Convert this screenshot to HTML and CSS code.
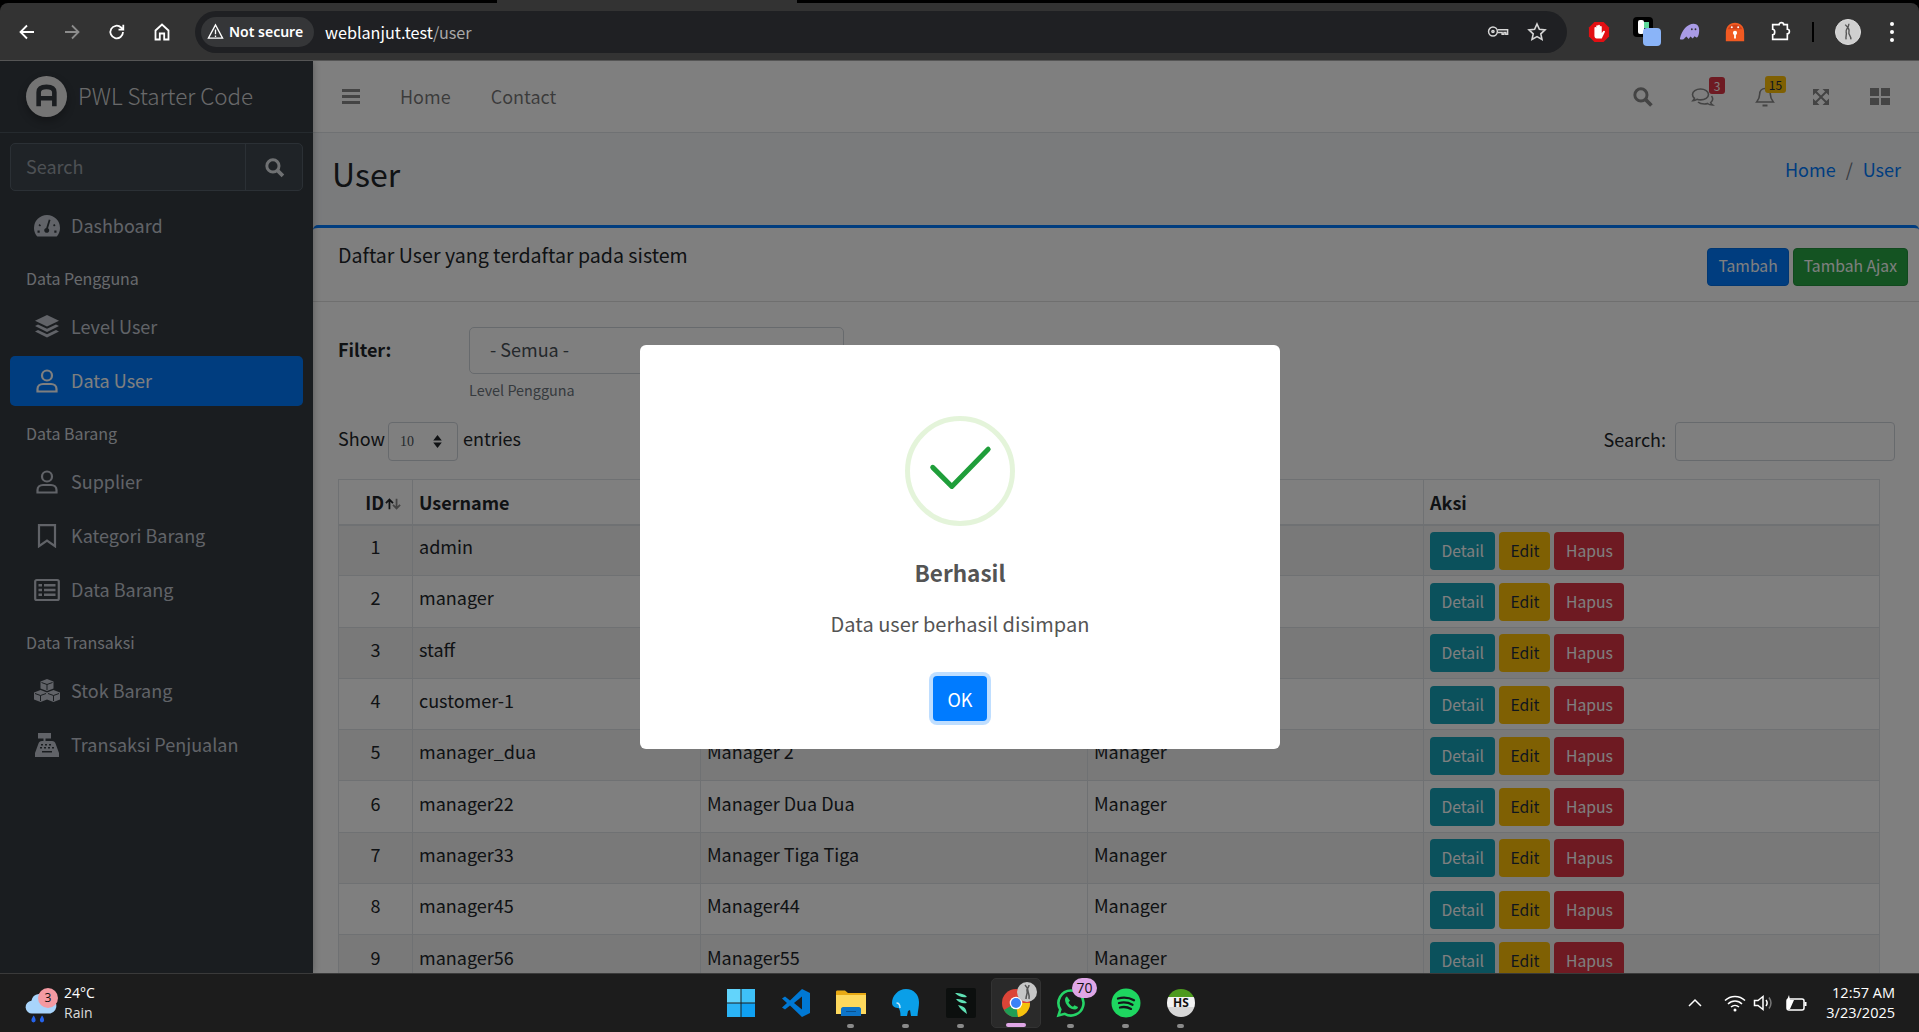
FILE: index.html
```html
<!DOCTYPE html>
<html lang="en">
<head>
<meta charset="utf-8">
<title>User</title>
<link rel="stylesheet" href="styles.css">
</head>
<body>
<div class="screen">
  <div class="topstrip"><span class="strip-b"></span><span class="strip-c"></span></div>
  <header class="chrome">
    <svg class="cicon" viewBox="0 0 20 20"><path d="M17 10H4M10 3.5 3.5 10l6.500 6.500" class="wl"/></svg>
    <svg class="cicon dim" viewBox="0 0 20 20"><path d="M3 10h13M10 3.500 16.500 10 10 16.500" class="gl"/></svg>
    <svg class="cicon" viewBox="0 0 20 20"><path d="M16 10a6.300 6.300 0 1 1-1.900-4.500L16 7.300M16.300 2.800v4.800h-4.800" class="wl"/></svg>
    <svg class="cicon" viewBox="0 0 20 20"><path d="M3.500 8.500 10 2.500l6.500 6v9h-4.300v-6H7.800v6H3.500z" class="wl"/></svg>
    <div class="omnibox">
      <div class="secure">
        <svg class="warn" viewBox="0 0 18 18"><path d="M9 2 1.500 16h15z" class="wl thin"/><path d="M9 7v5M9 13.200v1.500" class="wl thin"/></svg>
        <span>Not secure</span>
      </div>
      <div class="url">weblanjut.test<span class="path">/user</span></div>
      <svg class="omni-icon key" viewBox="0 0 24 14"><circle cx="6.500" cy="7" r="4.800" class="ll"/><circle cx="6.500" cy="7" r="1.200" class="ll"/><path d="M11.500 5h11v5h-2V8h-2v2h-2V8h-5" class="ll"/></svg>
      <svg class="omni-icon star" viewBox="0 0 20 20"><path d="m10 2 2.400 5.300 5.600.6-4.200 3.900 1.200 5.700L10 14.600l-5 2.900 1.200-5.700L2 7.900l5.600-.6z" class="ll"/></svg>
    </div>
    <div class="extensions">
      <svg class="ext" viewBox="0 0 24 24"><path d="M7 1h10l6 6v10l-6 6H7l-6-6V7z" fill="#e20f13"/><path d="M7 13V7.500a1 1 0 0 1 2 0V12V5.500a1 1 0 0 1 2 0V12V5a1 1 0 0 1 2 0v7V6.500a1 1 0 0 1 2 0V13l1.700-2a1 1 0 0 1 1.600 1.200L15 19H9.500C8 19 7 17.500 7 16z" fill="#fff"/></svg>
      <div class="ext-stack"><span class="ext-black"></span><span class="ext-bar"></span><span class="ext-green"></span><span class="ext-blue"></span></div>
      <svg class="ext" viewBox="0 0 24 24"><path d="M1 19C3 10 9 3 16 3c4 0 6 3 6 7 0 4-1 8-3 8l-2-1.500-2 2.500-2.500-2-2 2.500L8 17l-3 3c-2 .5-4 .5-4-1z" fill="#a99be6"/><circle cx="14" cy="9" r="1" fill="#333"/><circle cx="18" cy="9" r="1" fill="#333"/></svg>
      <svg class="ext" viewBox="0 0 24 24"><path d="M2 22v-9C2 6 6 2 12 2s10 4 10 11v9z" fill="#f15a22"/><path d="M4 9c1-3 4-5 8-5s7 2 8 5z" fill="#d2431a"/><circle cx="8.500" cy="6.800" r="1.100" fill="#fff"/><circle cx="15.500" cy="6.800" r="1.100" fill="#fff"/><circle cx="12" cy="13" r="2.300" fill="#fff"/><path d="M11 13h2v6h-2z" fill="#fff"/></svg>
      <svg class="ext" viewBox="0 0 24 24"><path d="M4 4h7c0-3 5-3 5 0h4v5c3 0 3 5 0 5v6H4v-5c3 0 3-6 0-6z" class="wl"/></svg>
      <span class="ext-sep"></span>
      <div class="avatar"><svg viewBox="0 0 26 26"><path d="M10 5c3 3 5 5 4 8s3 5 2 8M14 4c0 4-4 6-3 9s-1 5 0 8" class="al"/></svg></div>
      <div class="kebab"><i></i><i></i><i></i></div>
    </div>
  </header>

  <div class="page">
    <aside class="sidebar">
      <div class="brand">
        <div class="brand-logo"><svg viewBox="0 0 24 24"><path d="M5.500 20V8.500C5.500 5.500 8 4 12 4s6.500 1.500 6.500 4.500V20M5.500 13.500h13" class="brand-a"/></svg></div>
        <span class="brand-text">PWL Starter Code</span>
      </div>
      <div class="side-search"><span class="side-placeholder">Search</span><span class="side-btn"><svg viewBox="0 0 20 20"><circle cx="8.500" cy="8.500" r="5.800" class="side-s"/><path d="m13 13 5 5" class="side-s w3"/></svg></span></div>
      <nav class="side-nav">
        <a class="nav-link first"><svg class="nav-ic" viewBox="0 0 26 24"><path fill-rule="evenodd" d="M13 1a13 13 0 0 0-13 13c0 3 1 5.800 2.800 8 .3.400.8.500 1.300.500h17.800c.5 0 1-.1 1.300-.5C25 19.800 26 17 26 14A13 13 0 0 0 13 1zm1.800 4.500 1.700.5-2.500 8.200a2.500 2.500 0 1 1-1.800-.3zM5.500 10l1.500 1.200-1 1.300-1.500-1.200zM20.500 10l1 1.500-1.500 1-1-1.500zM3.500 16.500h2.200v2.200H3.500zM20.300 16.500h2.200v2.200h-2.200z"/></svg><span class="nav-label">Dashboard</span></a>
        <div class="nav-header">Data Pengguna</div>
        <a class="nav-link"><svg class="nav-ic" viewBox="0 0 26 24"><path d="M13 0 1 5.800 13 11.600l12-5.800z"/><path d="M4 9.500 1 11l12 6 12-6-3-1.500-9 4.300z"/><path d="M4 15 1 16.500l12 6 12-6-3-1.500-9 4.300z"/></svg><span class="nav-label">Level User</span></a>
        <a class="nav-link active"><svg class="nav-ic" viewBox="0 0 26 24"><circle cx="13" cy="6.500" r="5" class="nav-o"/><path d="M3.500 22.500v-2.500C3.500 17 6 15 9 15h8c3 0 5.500 2 5.500 5v2.500z" class="nav-o"/></svg><span class="nav-label">Data User</span></a>
        <div class="nav-header">Data Barang</div>
        <a class="nav-link"><svg class="nav-ic" viewBox="0 0 26 24"><circle cx="13" cy="6.500" r="5" class="nav-o"/><path d="M3.500 22.500v-2.500C3.500 17 6 15 9 15h8c3 0 5.500 2 5.500 5v2.500z" class="nav-o"/></svg><span class="nav-label">Supplier</span></a>
        <a class="nav-link"><svg class="nav-ic" viewBox="0 0 26 24"><path d="M5 1.200h16v21L13 16.500l-8 5.700z" class="nav-o"/></svg><span class="nav-label">Kategori Barang</span></a>
        <a class="nav-link"><svg class="nav-ic" viewBox="0 0 26 24"><rect x="1.200" y="2" width="23.600" height="20" rx="1.500" class="nav-o"/><path d="M4.500 6h3.500v2.500H4.500zM4.500 10.800h3.500v2.500H4.500zM4.500 15.500h3.500V18H4.500zM10 6h11.500v2.500H10zM10 10.800h11.500v2.500H10zM10 15.500h11.500V18H10z"/></svg><span class="nav-label">Data Barang</span></a>
        <div class="nav-header">Data Transaksi</div>
        <a class="nav-link"><svg class="nav-ic" viewBox="0 0 26 24"><path d="M13 0l6.500 2.500v7L13 12 6.500 9.500v-7z"/><path d="M6.500 11 13 13.500v7L6.500 23 0 20.500v-7zM19.500 11l6.500 2.500v7L19.500 23 13 20.500v-7z"/><path d="M7.500 3.500 13 5.500l5.500-2M13 5.500V11M1 14.500 6.500 16.500l5.500-2M14 14.500l5.500 2 5.500-2M6.500 16.500V22M19.500 16.500V22" class="cube-line"/></svg><span class="nav-label">Stok Barang</span></a>
        <a class="nav-link"><svg class="nav-ic" viewBox="0 0 26 24"><path d="M4 0h13v5.500h-5.500V8H18c2 0 3 1 3.500 2.500L25 20v4H1v-4l3.500-9.500C5 9 6 8 8 8h1.500V5.500H4z"/><path d="M7 11h2v1.500H7zM11 11h2v1.500h-2zM15 11h2v1.500h-2zM6 14h2v1.500H6zM10 14h2v1.500h-2zM14 14h2v1.500h-2zM18 14h2v1.500h-2zM8 18h10v1.500H8z" fill="#343a40"/></svg><span class="nav-label">Transaksi Penjualan</span></a>
      </nav>
    </aside>

    <main class="content">
      <div class="navbar">
        <div class="hamburger"><i></i><i></i><i></i></div>
        <a class="nav-item">Home</a>
        <a class="nav-item">Contact</a>
        <div class="nav-right">
          <svg class="nr nr-search" viewBox="0 0 20 20"><circle cx="8.500" cy="8.500" r="5.800" class="nr-s"/><path d="m13 13 5.500 5.500" class="nr-s w3"/></svg>
          <div class="nr-wrap wrap-msg">
            <svg class="nr nr-msg" viewBox="0 0 24 20"><path d="M9.500 2C5 2 1.500 4.500 1.500 7.500c0 1.500.8 2.800 2 3.800-.4 1-1 1.800-1.500 2.300 1.500 0 3-.6 4-1.300 1 .4 2.300.6 3.500.6 4.500 0 8-2.400 8-5.400S14 2 9.500 2z" class="nr-l"/><path d="M7 15c1.500 1.500 4 2 6.500 2 1 0 2-.1 3-.5 1 .8 3 1.500 5 1.500-.7-.5-1.500-1.500-1.800-2.500 1.200-1 2-2.300 2-3.600 0-1-.5-2-1.200-2.900" class="nr-l"/></svg>
            <span class="badge red">3</span>
          </div>
          <div class="nr-wrap wrap-bell">
            <svg class="nr nr-bell" viewBox="0 0 20 22"><path d="M10 2.500c-3 0-5.300 2.300-5.300 5.500 0 4-1 5.500-3 8h16.600c-2-2.500-3-4-3-8 0-3.200-2.300-5.500-5.300-5.500z" class="nr-l"/><path d="M7.500 18.500h5v2h-5z" class="nr-f"/></svg>
            <span class="badge yellow">15</span>
          </div>
          <svg class="nr nr-expand" viewBox="0 0 18 18"><path d="M1 1h6.500L4.950 3.550 9 7.600l4.050-4.050L10.500 1H17v6.500l-2.550-2.550L10.400 9l4.050 4.050L17 10.500V17h-6.500l2.550-2.550L9 10.400l-4.050 4.050L7.500 17H1v-6.500l2.550 2.550L7.600 9 3.550 4.950 1 7.500z" class="nr-f"/></svg>
          <div class="nr-grid"><i></i><i></i><i></i><i></i></div>
        </div>
      </div>

      <div class="content-header">
        <h1 class="title">User</h1>
        <div class="breadcrumb"><a>Home</a><span class="bc-sep">/</span><a>User</a></div>
      </div>

      <section class="card">
        <div class="card-header">
          <h3 class="card-title">Daftar User yang terdaftar pada sistem</h3>
          <div class="card-tools"><a class="btn btn-primary">Tambah</a><a class="btn btn-success">Tambah Ajax</a></div>
        </div>
        <div class="card-body">
          <div class="filter">
            <label class="filter-label">Filter:</label>
            <div class="filter-field">
              <div class="select-box">- Semua -</div>
              <small class="filter-help">Level Pengguna</small>
            </div>
          </div>
          <div class="dt-top">
            <div class="dt-length">Show <span class="len-select">10<svg class="updown" viewBox="0 0 10 14"><path d="M5 1 9 6H1zM5 13 1 8h8z" fill="#212529"/></svg></span> entries</div>
            <div class="dt-search">Search: <span class="search-box"></span></div>
          </div>
          <table class="table">
            <colgroup><col class="c1"><col class="c2"><col class="c3"><col class="c4"><col class="c5"></colgroup>
            <thead>
              <tr><th class="id-h">ID<svg class="sort" viewBox="0 0 18 14"><path d="M5 13V2M1 6l4-4 4 4" class="sort-up"/><path d="M13 1v11M9 8l4 4 4-4" class="sort-dn"/></svg></th><th>Username</th><th>Nama</th><th>Level Pengguna</th><th>Aksi</th></tr>
            </thead>
            <tbody>
              <tr><td class="num">1</td><td>admin</td><td>Administrator</td><td>Administrator</td><td class="aksi"><a class="btn-sm info">Detail</a><a class="btn-sm warning">Edit</a><a class="btn-sm danger">Hapus</a></td></tr>
              <tr><td class="num">2</td><td>manager</td><td>Manager</td><td>Manager</td><td class="aksi"><a class="btn-sm info">Detail</a><a class="btn-sm warning">Edit</a><a class="btn-sm danger">Hapus</a></td></tr>
              <tr><td class="num">3</td><td>staff</td><td>Staff/Kasir</td><td>Staff/Kasir</td><td class="aksi"><a class="btn-sm info">Detail</a><a class="btn-sm warning">Edit</a><a class="btn-sm danger">Hapus</a></td></tr>
              <tr><td class="num">4</td><td>customer-1</td><td>Customer Pertama</td><td>Customer</td><td class="aksi"><a class="btn-sm info">Detail</a><a class="btn-sm warning">Edit</a><a class="btn-sm danger">Hapus</a></td></tr>
              <tr><td class="num">5</td><td>manager_dua</td><td>Manager 2</td><td>Manager</td><td class="aksi"><a class="btn-sm info">Detail</a><a class="btn-sm warning">Edit</a><a class="btn-sm danger">Hapus</a></td></tr>
              <tr><td class="num">6</td><td>manager22</td><td>Manager Dua Dua</td><td>Manager</td><td class="aksi"><a class="btn-sm info">Detail</a><a class="btn-sm warning">Edit</a><a class="btn-sm danger">Hapus</a></td></tr>
              <tr><td class="num">7</td><td>manager33</td><td>Manager Tiga Tiga</td><td>Manager</td><td class="aksi"><a class="btn-sm info">Detail</a><a class="btn-sm warning">Edit</a><a class="btn-sm danger">Hapus</a></td></tr>
              <tr><td class="num">8</td><td>manager45</td><td>Manager44</td><td>Manager</td><td class="aksi"><a class="btn-sm info">Detail</a><a class="btn-sm warning">Edit</a><a class="btn-sm danger">Hapus</a></td></tr>
              <tr><td class="num">9</td><td>manager56</td><td>Manager55</td><td>Manager</td><td class="aksi"><a class="btn-sm info">Detail</a><a class="btn-sm warning">Edit</a><a class="btn-sm danger">Hapus</a></td></tr>
            </tbody>
          </table>
        </div>
      </section>
    </main>

    <div class="backdrop">
      <div class="modal">
        <div class="success-icon"><svg viewBox="0 0 110 110"><path d="M25 51 46 72 86 31" class="check"/></svg></div>
        <h2 class="modal-title">Berhasil</h2>
        <p class="modal-text">Data user berhasil disimpan</p>
        <button class="modal-ok">OK</button>
      </div>
    </div>
  </div>

  <footer class="taskbar">
    <div class="weather">
      <svg class="weather-ic" viewBox="0 0 34 34"><path d="M8 24a6 6 0 0 1-1-12 8 8 0 0 1 15-2 6.500 6.500 0 0 1 3 14z" fill="#a8d4fb"/><path d="M9 26c-1 2-2 3-2 4.500a2 2 0 0 0 4 0C11 29 10 27 9 26zM17 26c-1 2-2 3-2 4.500a2 2 0 0 0 4 0c0-1.500-1-3.500-2-4.500z" fill="#2563eb"/></svg>
      <span class="weather-badge">3</span>
      <div class="weather-text"><span class="temp">24°C</span><span class="cond">Rain</span></div>
    </div>
    <div class="apps">
      <div class="app"><svg viewBox="0 0 30 30"><rect x="1" y="1" width="13.500" height="13.500" fill="#62d4fb"/><rect x="15.500" y="1" width="13.500" height="13.500" fill="#3fc1f7"/><rect x="1" y="15.500" width="13.500" height="13.500" fill="#2bb4f6"/><rect x="15.500" y="15.500" width="13.500" height="13.500" fill="#0fa0f2"/></svg></div>
      <div class="app"><svg viewBox="0 0 30 30"><path d="M21 1 29 5v20l-8 4-12-11.500-5 4L1 19.500 6 15 1 10.500 4 8.500l5 4z" fill="#0078d4"/><path d="M21 8.500 13 15l8 6.500z" fill="#1c1c1c"/></svg></div>
      <div class="app on"><svg viewBox="0 0 30 30"><path d="M0 4c0-1 .5-1.500 1.500-1.500H9L12 5h18v21H0z" fill="#e8a913"/><path d="M0 7h30v19H0z" fill="#fdd85d"/><path d="M5 21c0-1 1-2 2-2h16c1 0 2 1 2 2v7H5z" fill="#0d74c8"/><path d="M10 23h10v1H10z" fill="#094f8c"/></svg></div>
      <div class="app on"><svg viewBox="0 0 30 30"><path d="M15 1c8 0 13 6 13 13 0 5-1 8-1.500 14H20l-1-6-2 1-1 5H9.500c0-4-.5-6-2-8C5 20 1 19 1 15 1 8 7 1 15 1z" fill="#0a9fe8"/><path d="M5.500 15c2 0 3.500 2 3.500 5" fill="none" stroke="#bfe7fb" stroke-width="1.500"/></svg></div>
      <div class="app on"><svg viewBox="0 0 30 30"><rect width="30" height="30" rx="2" fill="#0c0f0e"/><path d="M9 5c5 0 10 1 12 4-4 1-8 0-12-4zM10 11c4 0 9 1 11 4-4 1-8 0-11-4zM12 17c4 1 7 2 8 5l1 4c-3-2-7-5-9-9z" fill="#5fe0b4"/></svg></div>
      <div class="app active-app">
        <svg viewBox="0 0 30 30"><circle cx="15" cy="15" r="14" fill="#db4437"/><path d="M15 15 2.900 22A14 14 0 0 0 17 28.900z" fill="#1f9d55"/><path d="M15 15h14a14 14 0 0 1-12 13.900z" fill="#f4c20d"/><circle cx="15" cy="15" r="6.300" fill="#fff"/><circle cx="15" cy="15" r="5" fill="#3b82f6"/></svg>
        <span class="app-avatar"><svg viewBox="0 0 20 20"><path d="M8 3c2 2 3 4 3 6s2 4 1 8M12 3c0 3-3 4-2 6s-1 4-1 8" class="al"/></svg></span>
      </div>
      <div class="app on"><svg viewBox="0 0 30 30"><path d="M15 2.500A12.500 12.500 0 0 0 4.300 21.500L2.500 27.500l6.200-1.700A12.500 12.500 0 1 0 15 2.500z" fill="none" stroke="#25d366" stroke-width="2.600"/><path d="M11 8.500c-1 0-2 1.500-2 3 0 5 5 10 10 10 1.500 0 3-1 3-2.500l-3.500-1.800-1.500 1.500c-2-.8-4-2.800-4.500-4.500l1.500-1.500z" fill="#25d366"/></svg><span class="wa-badge">70</span></div>
      <div class="app on"><svg viewBox="0 0 30 30"><circle cx="15" cy="15" r="14.500" fill="#1ed760"/><path d="M7 10.500c6-1.500 11-1 16 1.800M8 15c5-1.200 9-.8 13.500 1.700M9 19.500c4-1 7.500-.6 11 1.400" fill="none" stroke="#14171a" stroke-width="2.300" stroke-linecap="round"/></svg></div>
      <div class="app on"><div class="hs"><span>HS</span></div></div>
    </div>
    <div class="tray">
      <svg class="tr tr-caret" viewBox="0 0 14 10"><path d="M1 8 7 2l6 6" class="tw"/></svg>
      <svg class="tr tr-wifi" viewBox="0 0 22 18"><path d="M1 6.500C6.500 1 15.500 1 21 6.500M4 10c4-4 10-4 14 0M7 13c2.300-2 5.700-2 8 0" class="tw"/><circle cx="11" cy="16" r="1.500" fill="#fff"/></svg>
      <svg class="tr tr-vol" viewBox="0 0 22 18"><path d="M1.500 6.500h3.500L10 2.500v13L5 11.500H1.500z" class="tw"/><path d="M13 6c1.500 2 1.500 4 0 6" class="tw"/><path d="M16 3.500c2.500 3.500 2.500 7.500 0 11" class="tg"/></svg>
      <svg class="tr tr-batt" viewBox="0 0 24 18"><rect x="3" y="5" width="17" height="11" rx="2" class="tw"/><path d="M20.500 8h2v4h-2zM3 15V6l2-5 1 5 4 0-4 9z" fill="#fff"/></svg>
      <div class="clock"><span>12:57 AM</span><span>3/23/2025</span></div>
    </div>
  </footer>
</div>
</body>
</html>
```
FILE: styles.css
```css
* { box-sizing: border-box; }
html, body { margin: 0; height: 100%; overflow: hidden; }
body { font-family: "Noto Sans CJK SC", "Source Sans Pro", "Open Sans", sans-serif; font-size: 18px; line-height: 30px; color: #212529; background: #000; }
a { color: inherit; text-decoration: none; }
.screen { width: 1919px; height: 1032px; display: flex; flex-direction: column; overflow: hidden; }

/* window top */
.topstrip { height: 3px; display: flex; flex: none; background: #000; }
.strip-b { margin-left: 497px; width: 300px; background: #333; }
.strip-c { flex: 1; }
.chrome { height: 58px; flex: none; background: #333; border-bottom: 1px solid #555; border-radius: 8px 8px 0 0; display: flex; align-items: center; padding: 0 0 0 17px; gap: 25px; font-family: "Open Sans", sans-serif; position: relative; }
.cicon { width: 20px; height: 20px; flex: none; }
.wl { fill: none; stroke: #fff; stroke-width: 1.800; }
.gl { fill: none; stroke: #8c8c8c; stroke-width: 1.800; }
.wl.thin { stroke-width: 1.400; }
.ll { fill: none; stroke: #d6d6d6; stroke-width: 1.600; }
.al { fill: none; stroke: #555; stroke-width: 1.500; }
.omnibox { width: 1372px; margin-left: -2px; height: 42px; background: #1f2023; border-radius: 21px; display: flex; align-items: center; padding: 0 0 0 6px; }
.secure { width: 113px; height: 30px; background: #353638; border-radius: 15px; display: flex; align-items: center; gap: 5px; padding-left: 6px; color: #fff; font-size: 14px; font-weight: 600; white-space: nowrap; font-family: "Noto Sans", sans-serif; line-height: 30px; }
.warn { width: 17px; height: 17px; flex: none; }
.url { margin-left: 11px; color: #fff; font-size: 16.200px; line-height: 30px; font-family: "Noto Sans CJK SC", sans-serif; }
.path { color: #a8a8a8; }
.omni-icon { flex: none; }
.key { width: 22px; height: 13px; margin-left: auto; }
.star { width: 20px; height: 20px; margin: 0 20px 0 18px; }
.extensions { display: flex; align-items: center; gap: 23px; margin-left: -4px; height: 40px; position: relative; flex: 1; }
.ext { width: 22px; height: 22px; flex: none; }
.ext-stack { width: 28px; height: 30px; position: relative; flex: none; margin-right: -5px; }
.ext-black { display: block; width: 20px; height: 20px; background: #000; border-radius: 4px; }
.ext-bar { display: block; position: absolute; left: 5px; top: 3px; width: 6px; height: 14px; background: #fff; border-radius: 2px; }
.ext-green { display: block; position: absolute; left: 11px; top: 5px; width: 5px; height: 6px; background: #5fd99a; }
.ext-blue { display: block; position: absolute; left: 10px; top: 11px; width: 18px; height: 18px; background: #8ab4f8; border-radius: 4px; }
.ext-sep { width: 2px; height: 20px; background: #000; flex: none; margin: 0 -2px 0 -2px; }
.avatar { width: 26px; height: 26px; border-radius: 50%; background: #cfcfcf; flex: none; border: 1px solid #ddd; }
.avatar svg { display: block; width: 100%; height: 100%; }
.kebab { display: flex; flex-direction: column; gap: 4px; flex: none; margin-left: 6px; }
.kebab i { display: block; width: 4px; height: 4px; background: #fff; border-radius: 50%; }

/* page */
.page { flex: 1; min-height: 0; display: flex; position: relative; overflow: hidden; }
.sidebar { width: 313px; flex: none; background: #343a40; color: #c2c7d0; box-shadow: 0 0 8px rgba(0,0,0,.3); z-index: 1; }
.brand { height: 72px; display: flex; align-items: center; padding-left: 26px; gap: 11px; border-bottom: 1px solid #4b545c; }
.brand-logo { width: 41px; height: 41px; border-radius: 50%; background: #e9e9e9; box-shadow: 0 4px 8px rgba(0,0,0,.3); flex: none; }
.brand-logo svg { display: block; width: 41px; height: 41px; padding: 6px; }
.brand-a { fill: none; stroke: #343a40; stroke-width: 3.800; }
.brand-text { font-size: 22.400px; line-height: 30px; font-weight: 300; color: rgba(255,255,255,.8); margin-top: -3px; }
.side-search { margin: 10px 10px 0; width: 293px; height: 48px; border: 1px solid #56606a; border-radius: 5px; background: #3f474e; display: flex; justify-content: space-between; }
.side-placeholder { padding-left: 15px; color: #9aa1a8; line-height: 45px; }
.side-btn { width: 57px; border-left: 1px solid #56606a; display: flex; align-items: center; justify-content: center; }
.side-btn svg { width: 21px; height: 21px; }
.side-s { fill: none; stroke: #dfe3e7; stroke-width: 2.800; }
.side-s.w3, .nr-s.w3 { stroke-width: 3.500; }
.side-nav { padding: 0 10px; display: flex; flex-direction: column; }
.nav-link { height: 50px; margin-bottom: 4px; display: flex; align-items: center; padding-left: 24px; border-radius: 5px; gap: 11px; color: #c2c7d0; }
.nav-label { margin-top: -2px; }
.nav-link.first { margin-top: 10px; }
.nav-link.active { background: #007bff; color: #fff; }
.nav-ic { width: 26px; height: 24px; flex: none; fill: #c2c7d0; }
.active .nav-ic { fill: #fff; }
.nav-o { fill: none; stroke: #c2c7d0; stroke-width: 2.200; }
.active .nav-o { stroke: #fff; }
.cube-line { fill: none; stroke: #343a40; stroke-width: 1; }
.nav-header { font-size: 16px; line-height: 26px; padding: 10px 0 10px 16px; height: 47px; color: #d0d4db; }

.content { flex: 1; min-width: 0; background: #f4f6f9; }
.navbar { height: 72px; background: #fff; border-bottom: 1px solid #dee2e6; display: flex; align-items: center; padding-left: 29px; color: rgba(0,0,0,.55); }
.hamburger { width: 18px; display: flex; flex-direction: column; gap: 3px; margin-right: 40px; }
.hamburger i { display: block; height: 3px; background: #888; }
.nav-item { margin-right: 40px; margin-top: -2px; }
.nav-right { margin-left: auto; display: flex; align-items: center; padding-right: 29px; }
.nr { display: block; }
.nr-search { width: 21px; height: 21px; }
.nr-s { fill: none; stroke: #888; stroke-width: 2.800; }
.nr-l { fill: none; stroke: #888; stroke-width: 1.600; }
.nr-f { fill: #888; }
.nr-wrap { position: relative; }
.wrap-msg { margin-left: 38px; }
.wrap-bell { margin-left: 40px; }
.nr-msg { width: 24px; height: 20px; }
.nr-bell { width: 20px; height: 22px; }
.badge { position: absolute; top: -10px; height: 17px; font-size: 12px; line-height: 17px; text-align: center; border-radius: 3px; font-weight: 400; }
.badge.red { left: 18px; width: 16px; background: #dc3545; color: #fff; }
.badge.yellow { left: 10px; width: 21px; background: #ffc107; color: #1f2d3d; }
.nr-expand { width: 18px; height: 18px; margin-left: 37px; }
.nr-grid { width: 20px; height: 17px; margin-left: 40px; display: grid; grid-template-columns: 1fr 1fr; gap: 2px; }
.nr-grid i { background: #888; }

.content-header { height: 92px; display: flex; justify-content: space-between; padding: 18px 18px 0 19px; align-items: flex-start; }
.title { margin: 0; font-size: 32px; line-height: 44px; font-weight: 400; color: #212529; }
.breadcrumb { display: flex; color: #007bff; padding-top: 3px; }
.bc-sep { color: #6c757d; padding: 0 10px; }

.card { background: #fff; border-top: 3px solid #007bff; border-radius: 5px 5px 0 0; }
.card-header { height: 74px; border-bottom: 1px solid rgba(0,0,0,.125); display: flex; justify-content: space-between; padding: 12px 11px 0 25px; }
.card-title { margin: 0; font-size: 19.600px; line-height: 30px; font-weight: 400; }
.card-tools { display: flex; gap: 4px; padding-top: 8px; }
.btn { height: 38px; padding: 0 10px; font-size: 15.700px; line-height: 34px; border-radius: 4px; color: #fff; border: 1px solid transparent; }
.btn-primary { background: #007bff; border-color: #006fe6; }
.btn-success { background: #28a745; border-color: #23923d; }
.card-body { padding: 25px 25px 0; }
.filter { display: flex; }
.filter-label { width: 131px; font-weight: 700; line-height: 45px; flex: none; }
.select-box { width: 375px; height: 47px; border: 1px solid #ced4da; border-radius: 5px; padding-left: 20px; line-height: 42px; color: #495057; }
.filter-help { display: block; font-size: 14.400px; line-height: 24px; margin-top: 4px; color: #6c757d; }
.dt-top { display: flex; justify-content: space-between; margin-top: 20px; }
.dt-length, .dt-search { display: flex; align-items: flex-start; height: 39px; }
.dt-length { gap: 5px; line-height: 32px; }
.dt-search { gap: 9px; margin-right: -1px; line-height: 35px; }
.len-select { width: 70px; height: 39px; margin-left: -2px; border: 1px solid #ced4da; border-radius: 4px; font-size: 14px; padding-left: 11px; line-height: 38px; display: flex; align-items: center; gap: 18px; font-family: "Liberation Serif", serif; color: #495057; }
.updown { width: 11px; height: 15px; }
.search-box { width: 220px; height: 39px; border: 1px solid #ced4da; border-radius: 4px; }
.table { width: 1541px; margin-top: 18px; border-collapse: collapse; table-layout: fixed; }
.c1 { width: 74px; } .c2 { width: 288px; } .c3 { width: 387px; } .c4 { width: 336px; } .c5 { width: 456px; }
.table th, .table td { border: 1px solid #dee2e6; padding: 0 6px; text-align: left; height: 51.300px; vertical-align: middle; }
.table th { height: 45px; font-weight: 700; border-bottom-width: 2px; line-height: 28px; }
.table td { padding-bottom: 8px; }
.table td.aksi { padding: 1px 5px 0 6px; }
.table tbody tr:nth-child(odd) { background: rgba(0,0,0,.05); }
.id-h { text-align: right !important; padding-right: 11px !important; white-space: nowrap; }
.sort { display: inline-block; width: 16px; height: 14px; margin-left: 1px; vertical-align: -1px; }
.sort-up { fill: none; stroke: #212529; stroke-width: 2; }
.sort-dn { fill: none; stroke: #888; stroke-width: 2; }
.num { text-align: center !important; }
.btn-sm { display: inline-block; height: 38px; line-height: 35px; font-size: 15.700px; padding: 0 10.500px; margin-right: 4px; border-radius: 4px; border: 1px solid transparent; vertical-align: middle; }
.info { background: #17a2b8; color: #fff; }
.warning { background: #ffc107; color: #1f2d3d; padding: 0 10px; }
.danger { background: #dc3545; color: #fff; }

.backdrop { position: absolute; inset: 0; z-index: 2; background: rgba(0,0,0,.5); display: flex; justify-content: center; align-items: flex-start; padding: 284px 0 0 1px; }
.modal { width: 640px; height: 404px; background: #fff; border-radius: 6px; display: flex; flex-direction: column; align-items: center; padding-top: 71px; }
.success-icon { width: 110px; height: 110px; border-radius: 50%; border: 5px solid rgba(165,220,134,.3); flex: none; }
.success-icon svg { display: block; width: 100px; height: 100px; }
.check { fill: none; stroke: #1f9e3a; stroke-width: 5.500; stroke-linecap: round; stroke-linejoin: round; }
.modal-title { margin: 28px 0 0; font-size: 22.500px; line-height: 36px; font-weight: 700; color: #545454; }
.modal-text { margin: 18px 0 0; font-size: 20px; line-height: 32px; color: #545454; font-weight: 400; }
.modal-ok { margin-top: 36px; width: 54px; height: 45px; border: 0; padding: 0; border-radius: 4px; background: #007bff; color: #fff; font-size: 18px; font-family: inherit; box-shadow: 0 0 0 4px rgba(0,123,255,.25); }

/* taskbar */
.taskbar { height: 59px; flex: none; background: #1c1c1c; display: flex; align-items: center; position: relative; font-family: "Open Sans", sans-serif; color: #fff; border-top: 1px solid #3a3a3a; }
.weather { width: 716px; padding-left: 24px; display: flex; align-items: center; position: relative; gap: 2px; flex: none; }
.weather-ic { width: 36px; height: 36px; margin-top: 6px; }
.weather-badge { position: absolute; left: 38px; top: 6px; width: 20px; height: 20px; border-radius: 50%; background: #f49aa2; color: #111; font-size: 12px; line-height: 20px; text-align: center; }
.weather-text { display: flex; flex-direction: column; font-size: 14px; line-height: 20px; margin-left: 2px; }
.cond { color: #ddd; }
.apps { display: flex; gap: 5px; align-items: center; flex: none; }
.app { width: 50px; height: 50px; display: flex; align-items: center; justify-content: center; position: relative; border-radius: 5px; }
.app svg { width: 30px; height: 30px; display: block; }
.app.on::after, .active-app::after { content: ""; position: absolute; left: 21px; bottom: 0; width: 7px; height: 4px; border-radius: 2px; background: #8a8a8a; }
.active-app { background: #2a2a2a; border: 1px solid #333; }
.active-app::after { left: 14px; width: 20px; background: #dfa6e6; }
.app-avatar { position: absolute; right: 3px; top: 3px; width: 20px; height: 20px; border-radius: 50%; background: #c6c6c6; }
.app-avatar svg { width: 20px; height: 20px; }
.wa-badge { position: absolute; right: -1px; top: 0; width: 25px; height: 20px; border-radius: 10px; background: #dfa6e6; color: #111; font-size: 14px; line-height: 20px; text-align: center; }
.hs { width: 28px; height: 28px; border-radius: 50%; background: linear-gradient(#4c9a1e 0 30%, #f2f2f2 30% 65%, #d6d6d6 65%); display: flex; align-items: center; justify-content: center; }
.hs span { color: #111; font-size: 12px; font-weight: 700; line-height: 12px; }
.tray { margin-left: auto; display: flex; align-items: center; padding-right: 24px; }
.tr { display: block; flex: none; }
.tw { fill: none; stroke: #fff; stroke-width: 1.500; }
.tg { fill: none; stroke: #777; stroke-width: 1.500; }
.tr-caret { width: 14px; height: 10px; }
.tr-wifi { width: 22px; height: 18px; margin-left: 22px; }
.tr-vol { width: 22px; height: 18px; margin-left: 7px; }
.tr-batt { width: 24px; height: 18px; margin-left: 9px; }
.clock { margin-left: 18px; display: flex; flex-direction: column; align-items: flex-end; font-size: 14.500px; line-height: 20px; }
```
